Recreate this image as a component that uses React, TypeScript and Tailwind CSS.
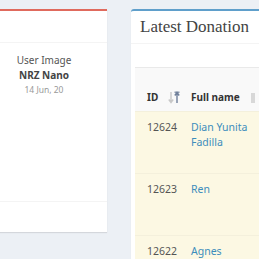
export default function App() {
  const rows = [
    { id: "12624", name: ["Dian Yunita", "Fadilla"] },
    { id: "12623", name: ["Ren"] },
    { id: "12622", name: ["Agnes"] },
  ];
  return (
    <div className="w-[259px] h-[259px] overflow-hidden bg-[#ecf0f5] pt-[9px] flex items-start gap-[24px] font-['Noto_Sans',sans-serif]">
      <div className="w-[107px] h-[223px] shrink-0 bg-white border-t-[2px] border-[#e06a5d] shadow-[0_1px_1px_rgba(0,0,0,0.1)] flex flex-col">
        <div className="h-[32px] shrink-0 border-b border-[#f4f4f4]" />
        <div className="flex-1">
          <div className="w-[88px] pt-[10px] flex flex-col items-center">
            <div className="text-[10px] leading-[15px] text-[#555]">User Image</div>
            <div className="text-[10px] leading-[15px] font-bold text-[#444]">NRZ Nano</div>
            <div className="text-[8.5px] leading-[14px] text-[#999]">14 Jun, 20</div>
          </div>
        </div>
        <div className="h-[31px] shrink-0 border-t border-[#f4f4f4]" />
      </div>
      <div className="w-[300px] shrink-0 bg-white border-t-[2px] border-[#5f9fcb] rounded-tl-[3px] shadow-[0_1px_1px_rgba(0,0,0,0.1)] flex flex-col">
        <div className="h-[33px] shrink-0 border-b border-[#f4f4f4] px-[9px] flex items-center pb-[1px]">
          <span className="font-['Liberation_Serif',serif] text-[17px] leading-none text-[#444]">Latest Donation</span>
        </div>
        <div className="shrink-0 pl-[4px] pt-[23px]">
          <div className="border-t border-[#e9e9e9]">
            <div className="h-[43px] bg-[#f9f9f9] flex items-end pb-[6px] text-[10px] leading-[15px] font-bold text-[#333]">
              <div className="w-[48px] pl-[12px] flex items-center justify-between pr-[3px]">
                <span>ID</span>
                <svg width="12" height="13" viewBox="0 0 12 13" className="mb-[1px]">
                  <path d="M3 1 V11 M0.8 8.5 L3 11.5 L5.2 8.5" stroke="#c8c8c8" strokeWidth="1.4" fill="none" />
                  <path d="M9 12 V2 M6.8 4.5 L9 1.5 L11.2 4.5" stroke="#6f7f9a" strokeWidth="1.4" fill="none" />
                  <path d="M6.5 1.2 H11.5" stroke="#6f7f9a" strokeWidth="1.2" />
                </svg>
              </div>
              <div className="w-[68px] pl-[8px]">Full name</div>
              <div className="w-[4px] h-[10px] bg-[#d8d8d8] mb-[2px]" />
            </div>
            {rows.map((r) => (
              <div key={r.id} className="h-[62px] bg-[#fcf8e3] border-t border-[#f4f0dc] flex pt-[8px] text-[10.5px] leading-[15px]">
                <div className="w-[48px] pl-[12px] text-[#555]">{r.id}</div>
                <div className="w-[68px] pl-[8px] text-[#3c8dbc]">
                  {r.name.map((n) => (
                    <div key={n}>{n}</div>
                  ))}
                </div>
              </div>
            ))}
          </div>
        </div>
      </div>
    </div>
  );
}
